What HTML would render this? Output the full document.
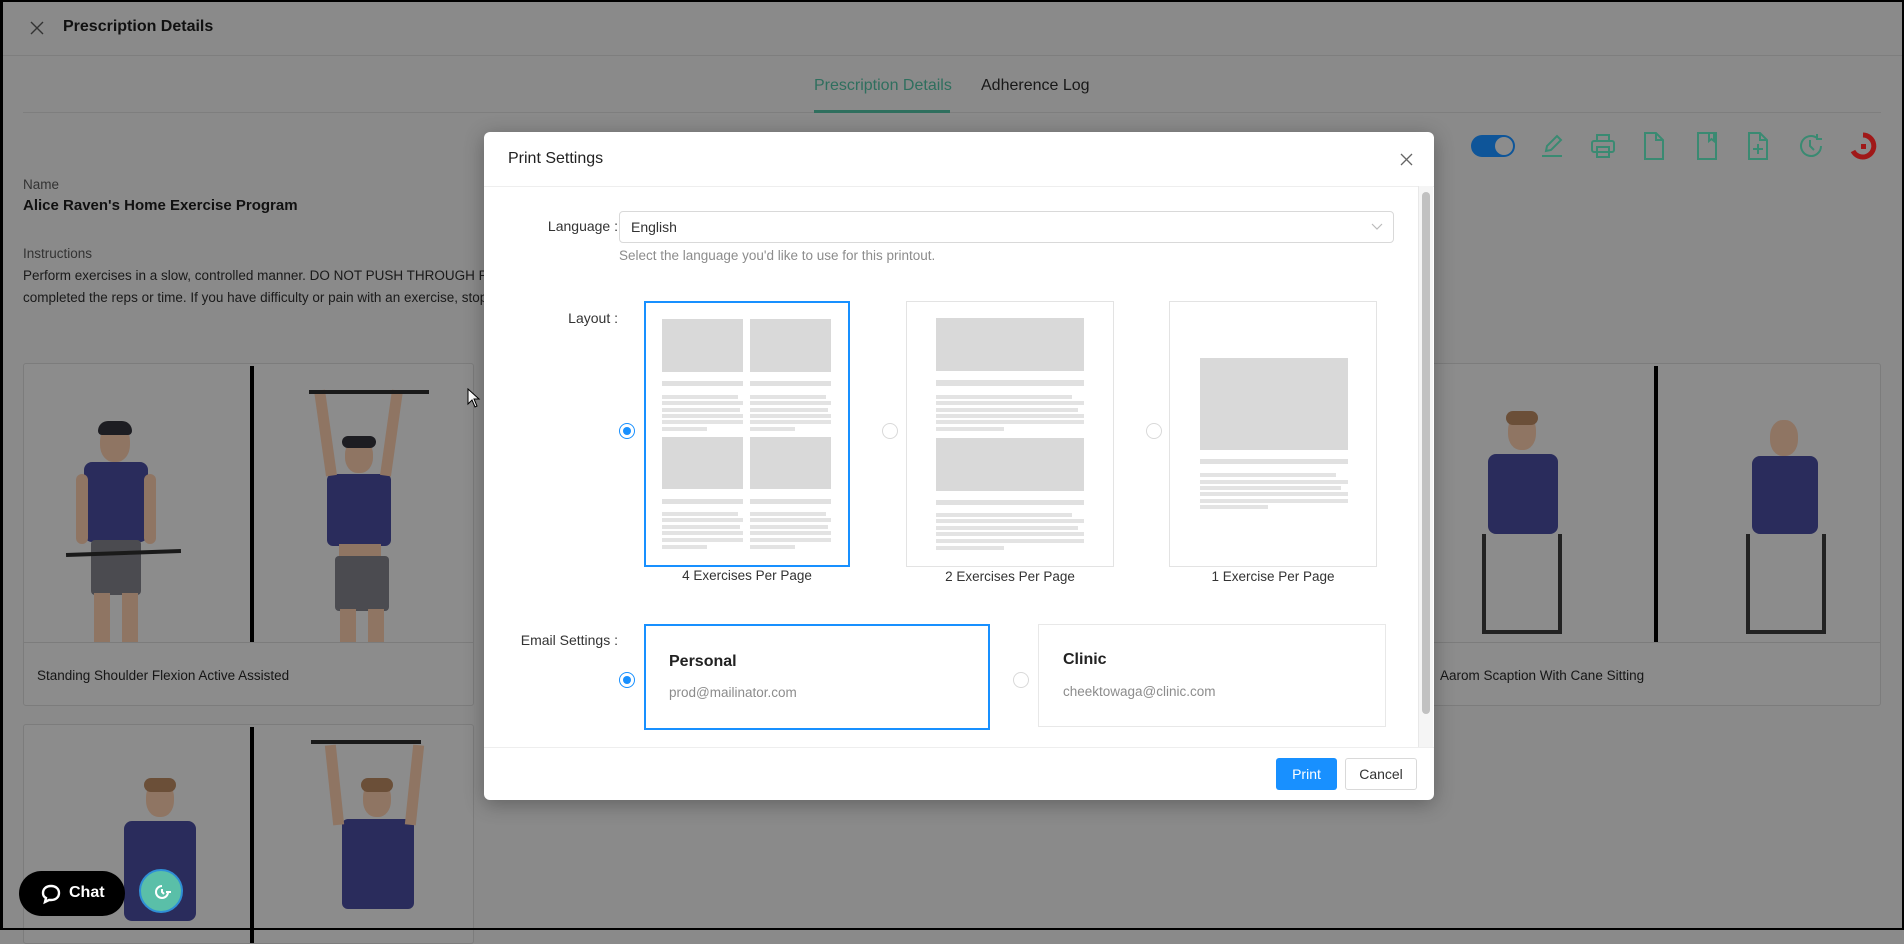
<!DOCTYPE html>
<html><head><meta charset="utf-8">
<style>
*{box-sizing:border-box;margin:0;padding:0}
body{width:1904px;height:930px;overflow:hidden;background:#8a8a8a;font-family:"Liberation Sans",sans-serif;position:relative;color:#161616}
.a{position:absolute}
.frame{position:absolute;left:0;top:0;width:1904px;height:930px;border:2px solid #000;border-left-width:3px;pointer-events:none;z-index:50}
.t{white-space:nowrap}
.card{position:absolute;border:1px solid #7c7c7c;border-radius:3px;background:#8c8c8c;overflow:hidden}
.fig{position:absolute}
.modal{position:absolute;left:484px;top:132px;width:950px;height:668px;background:#fff;border-radius:6px;box-shadow:0 4px 20px rgba(0,0,0,.3)}
.lbl{position:absolute;font-size:14px;color:#333;text-align:right}
.g{position:absolute;background:#d9d9d9}
.l{position:absolute;background:#e3e3e3;height:4px}
.b{position:absolute;background:#e0e0e0;height:5px}
.radio{position:absolute;width:16px;height:16px;border-radius:50%;border:1px solid #d9d9d9;background:#fff}
.radio.on{border-color:#1890ff}
.radio.on:after{content:"";position:absolute;left:3px;top:3px;width:8px;height:8px;border-radius:50%;background:#1890ff}
.cap{position:absolute;font-size:13.5px;color:#333;text-align:center}
</style></head><body>
<div class="frame"></div>

<svg class="a" style="left:30px;top:21px" width="14" height="14" viewBox="0 0 14 14"><path d="M1 1L13 13M13 1L1 13" stroke="#333" stroke-width="1.4"/></svg>
<div class="a t" style="left:63px;top:18px;font-size:16px;font-weight:bold;color:#111">Prescription Details</div>
<div class="a" style="left:3px;top:55px;width:1900px;height:1px;background:#7e7e7e"></div>

<div class="a t" style="left:814px;top:77px;font-size:16px;color:#2f6f5e">Prescription Details</div>
<div class="a t" style="left:981px;top:77px;font-size:16px;color:#181818">Adherence Log</div>
<div class="a" style="left:23px;top:112px;width:1858px;height:1px;background:#7e7e7e"></div>
<div class="a" style="left:814px;top:110px;width:136px;height:3px;background:#2f6f5e"></div>

<div class="a" style="left:1471px;top:135px;width:44px;height:22px;border-radius:11px;background:#0e5599"><div class="a" style="left:24px;top:2px;width:18px;height:18px;border-radius:50%;background:#8c8c8c"></div></div>
<svg class="a" style="left:1538px;top:132px" width="28" height="28" viewBox="0 0 28 28" fill="none" stroke="#3a8a72" stroke-width="2"><path d="M8 19L9 14L19 4L23 8L13 18Z"/><path d="M4 24H24"/></svg>
<svg class="a" style="left:1589px;top:132px" width="28" height="28" viewBox="0 0 28 28" fill="none" stroke="#3a8a72" stroke-width="2"><rect x="8" y="3" width="12" height="6"/><rect x="3" y="9" width="22" height="11" rx="2"/><rect x="8" y="15" width="12" height="10"/></svg>
<svg class="a" style="left:1641px;top:131px" width="26" height="30" viewBox="0 0 26 30" fill="none" stroke="#3a8a72" stroke-width="2"><path d="M4 2H15L22 9V28H4Z"/><path d="M15 2V9H22"/></svg>
<svg class="a" style="left:1694px;top:131px" width="26" height="30" viewBox="0 0 26 30" fill="none" stroke="#3a8a72" stroke-width="2"><rect x="4" y="2" width="18" height="26"/><path d="M15 2V10L17.5 8L20 10V2"/></svg>
<svg class="a" style="left:1745px;top:131px" width="26" height="30" viewBox="0 0 26 30" fill="none" stroke="#3a8a72" stroke-width="2"><path d="M4 2H15L22 9V28H4Z"/><path d="M15 2V9H22M13 13V23M8 18H18"/></svg>
<svg class="a" style="left:1797px;top:132px" width="28" height="28" viewBox="0 0 28 28" fill="none" stroke="#3a8a72" stroke-width="2"><path d="M24 14A10 10 0 1 1 20 6"/><path d="M20 2V7H25"/><path d="M13 8V14L17 18"/></svg>
<svg class="a" style="left:1848px;top:131px" width="30" height="30" viewBox="0 0 30 30" fill="none"><path d="M15 4A11 11 0 1 1 5 20" stroke="#a01818" stroke-width="5"/><rect x="13" y="13" width="5" height="5" fill="#a01818"/></svg>

<div class="a t" style="left:23px;top:177px;font-size:13.5px;color:#333">Name</div>
<div class="a t" style="left:23px;top:197px;font-size:15px;font-weight:bold;color:#111">Alice Raven's Home Exercise Program</div>
<div class="a t" style="left:23px;top:246px;font-size:13.5px;color:#333">Instructions</div>
<div class="a t" style="left:23px;top:268px;font-size:13.5px;color:#1a1a1a">Perform exercises in a slow, controlled manner. DO NOT PUSH THROUGH PAIN. Stop exercise if you experience increased pain, numbness or tingling. Maintain proper form and stop exercises when you feel muscle fatigue, or you have</div>
<div class="a t" style="left:23px;top:290px;font-size:13.5px;color:#1a1a1a">completed the reps or time. If you have difficulty or pain with an exercise, stop and contact your physical therapist.</div>

<div class="card" style="left:23px;top:363px;width:451px;height:343px">
 <div class="a" style="left:0;top:278px;width:449px;height:1px;background:#7c7c7c"></div>
 <div class="a" style="left:226px;top:2px;width:4px;height:276px;background:#000"></div>
 <div class="a t" style="left:13px;top:304px;font-size:13.5px">Standing Shoulder Flexion Active Assisted</div>
 <div class="fig" style="left:76px;top:60px;width:30px;height:38px;border-radius:45%;background:#8f7563"></div>
 <div class="fig" style="left:74px;top:57px;width:34px;height:14px;border-radius:10px 10px 4px 4px;background:#1d1d22"></div>
 <div class="fig" style="left:60px;top:98px;width:64px;height:80px;border-radius:8px;background:#2a2c5c"></div>
 <div class="fig" style="left:52px;top:110px;width:12px;height:70px;background:#8f7563;border-radius:6px"></div>
 <div class="fig" style="left:120px;top:110px;width:12px;height:70px;background:#8f7563;border-radius:6px"></div>
 <div class="fig" style="left:67px;top:176px;width:50px;height:55px;background:#4b4b50;border-radius:4px"></div>
 <div class="fig" style="left:70px;top:229px;width:16px;height:49px;background:#8f7563"></div>
 <div class="fig" style="left:98px;top:229px;width:16px;height:49px;background:#8f7563"></div>
 <div class="fig" style="left:42px;top:187px;width:115px;height:4px;background:#1a1a1a;transform:rotate(-2deg)"></div>
 <div class="fig" style="left:321px;top:75px;width:28px;height:34px;border-radius:45%;background:#8f7563"></div>
 <div class="fig" style="left:318px;top:72px;width:34px;height:12px;border-radius:10px;background:#1d1d22"></div>
 <div class="fig" style="left:303px;top:110px;width:64px;height:72px;border-radius:6px;background:#2a2c5c"></div>
 <div class="fig" style="left:296px;top:26px;width:11px;height:86px;background:#8f7563;transform:rotate(-8deg)"></div>
 <div class="fig" style="left:362px;top:26px;width:11px;height:86px;background:#8f7563;transform:rotate(8deg)"></div>
 <div class="fig" style="left:285px;top:26px;width:120px;height:4px;background:#1a1a1a"></div>
 <div class="fig" style="left:315px;top:180px;width:42px;height:12px;background:#8f7563"></div>
 <div class="fig" style="left:311px;top:192px;width:54px;height:55px;background:#4b4b50;border-radius:4px"></div>
 <div class="fig" style="left:316px;top:245px;width:16px;height:33px;background:#8f7563"></div>
 <div class="fig" style="left:344px;top:245px;width:16px;height:33px;background:#8f7563"></div>
</div>
<div class="card" style="left:23px;top:724px;width:451px;height:220px">
 <div class="a" style="left:226px;top:2px;width:4px;height:220px;background:#000"></div>
 <div class="fig" style="left:122px;top:56px;width:28px;height:36px;border-radius:45%;background:#8f7563"></div>
 <div class="fig" style="left:120px;top:53px;width:32px;height:14px;border-radius:10px;background:#6b4f38"></div>
 <div class="fig" style="left:100px;top:96px;width:72px;height:100px;border-radius:8px;background:#2a2c5c"></div>
 <div class="fig" style="left:339px;top:56px;width:28px;height:36px;border-radius:45%;background:#8f7563"></div>
 <div class="fig" style="left:337px;top:53px;width:32px;height:14px;border-radius:10px;background:#6b4f38"></div>
 <div class="fig" style="left:318px;top:94px;width:72px;height:90px;border-radius:6px;background:#2a2c5c"></div>
 <div class="fig" style="left:287px;top:15px;width:110px;height:4px;background:#1a1a1a"></div>
 <div class="fig" style="left:305px;top:20px;width:11px;height:80px;background:#8f7563;transform:rotate(-6deg)"></div>
 <div class="fig" style="left:385px;top:20px;width:11px;height:80px;background:#8f7563;transform:rotate(6deg)"></div>
</div>
<div class="card" style="left:1409px;top:363px;width:472px;height:343px">
 <div class="a" style="left:0;top:278px;width:470px;height:1px;background:#7c7c7c"></div>
 <div class="a" style="left:244px;top:2px;width:4px;height:276px;background:#000"></div>
 <div class="a t" style="left:30px;top:304px;font-size:13.5px">Aarom Scaption With Cane Sitting</div>
 <div class="fig" style="left:98px;top:50px;width:28px;height:36px;border-radius:45%;background:#8f7563"></div>
 <div class="fig" style="left:96px;top:47px;width:32px;height:14px;border-radius:10px;background:#6b4f38"></div>
 <div class="fig" style="left:78px;top:90px;width:70px;height:80px;border-radius:8px;background:#2a2c5c"></div>
 <div class="fig" style="left:72px;top:170px;width:80px;height:100px;border:4px solid #222;border-top:none"></div>
 <div class="fig" style="left:360px;top:56px;width:28px;height:36px;border-radius:45%;background:#8f7563"></div>
 <div class="fig" style="left:342px;top:92px;width:66px;height:78px;border-radius:8px;background:#2a2c5c"></div>
 <div class="fig" style="left:336px;top:170px;width:80px;height:100px;border:4px solid #222;border-top:none"></div>
</div>

<div class="a" style="left:19px;top:871px;width:106px;height:45px;border-radius:23px;background:#000;color:#fff;font-weight:bold;font-size:16px">
 <svg class="a" style="left:21px;top:12px" width="22" height="22" viewBox="0 0 22 22" fill="none" stroke="#fff" stroke-width="2.4"><path d="M11 3C6 3 3 6 3 10C3 12 4 14 6 15L5 19L9 17C10 17 10 17 11 17C16 17 19 14 19 10C19 6 16 3 11 3Z"/></svg>
 <div class="a t" style="left:50px;top:13px">Chat</div>
</div>
<div class="a" style="left:139px;top:869px;width:44px;height:44px;border-radius:50%;background:#5abfa8;border:2px solid #2f8fd6">
 <svg class="a" style="left:11px;top:11px" width="20" height="20" viewBox="0 0 20 20" fill="none" stroke="#fff" stroke-width="2"><path d="M16 10A6 6 0 1 1 10 4"/><path d="M10 7V10L12 12M14 10H19"/></svg>
</div>
<svg class="a" style="left:467px;top:388px" width="14" height="20" viewBox="0 0 14 20"><path d="M1 1V16L5 12L8 19L10 18L7 11H12Z" fill="#fff" stroke="#000"/></svg>

<div class="modal">
 <div class="a t" style="left:24px;top:18px;font-size:16px;color:#222">Print Settings</div>
 <svg class="a" style="left:916px;top:21px" width="13" height="13" viewBox="0 0 13 13"><path d="M1 1L12 12M12 1L1 12" stroke="#666" stroke-width="1.3"/></svg>
 <div class="a" style="left:0;top:54px;width:950px;height:1px;background:#eee"></div>

 <div class="lbl t" style="right:816px;top:86px">Language :</div>
 <div class="a" style="left:135px;top:79px;width:775px;height:32px;border:1px solid #d9d9d9;border-radius:4px">
  <div class="a t" style="left:11px;top:7px;font-size:14px;color:#333">English</div>
  <svg class="a" style="left:751px;top:11px" width="12" height="8" viewBox="0 0 12 8" fill="none" stroke="#bbb" stroke-width="1.2"><path d="M1 1L6 6L11 1"/></svg>
 </div>
 <div class="a t" style="left:135px;top:116px;font-size:13.5px;color:#8c8c8c">Select the language you'd like to use for this printout.</div>

 <div class="lbl t" style="right:816px;top:178px">Layout :</div>
 <div class="radio on" style="left:135px;top:291px"></div>
 <div class="radio" style="left:398px;top:291px"></div>
 <div class="radio" style="left:662px;top:291px"></div>

 <div class="a" style="left:160px;top:169px;width:206px;height:266px;border:2px solid #1890ff"></div>
 <div class="g" style="left:178px;top:187px;width:81px;height:53px"></div>
 <div class="g" style="left:266px;top:187px;width:81px;height:53px"></div>
 <div class="b" style="left:178px;top:249px;width:81px"></div><div class="b" style="left:266px;top:249px;width:81px"></div>
 <div class="l" style="left:178px;top:263px;width:76px"></div><div class="l" style="left:266px;top:263px;width:76px"></div>
 <div class="l" style="left:178px;top:269px;width:81px"></div><div class="l" style="left:266px;top:269px;width:81px"></div>
 <div class="l" style="left:178px;top:276px;width:78px"></div><div class="l" style="left:266px;top:276px;width:78px"></div>
 <div class="l" style="left:178px;top:282px;width:81px"></div><div class="l" style="left:266px;top:282px;width:81px"></div>
 <div class="l" style="left:178px;top:288px;width:81px"></div><div class="l" style="left:266px;top:288px;width:81px"></div>
 <div class="l" style="left:178px;top:295px;width:45px"></div><div class="l" style="left:266px;top:295px;width:45px"></div>
 <div class="g" style="left:178px;top:305px;width:81px;height:52px"></div>
 <div class="g" style="left:266px;top:305px;width:81px;height:52px"></div>
 <div class="b" style="left:178px;top:367px;width:81px"></div><div class="b" style="left:266px;top:367px;width:81px"></div>
 <div class="l" style="left:178px;top:380px;width:76px"></div><div class="l" style="left:266px;top:380px;width:76px"></div>
 <div class="l" style="left:178px;top:386px;width:81px"></div><div class="l" style="left:266px;top:386px;width:81px"></div>
 <div class="l" style="left:178px;top:393px;width:78px"></div><div class="l" style="left:266px;top:393px;width:78px"></div>
 <div class="l" style="left:178px;top:399px;width:81px"></div><div class="l" style="left:266px;top:399px;width:81px"></div>
 <div class="l" style="left:178px;top:406px;width:81px"></div><div class="l" style="left:266px;top:406px;width:81px"></div>
 <div class="l" style="left:178px;top:413px;width:45px"></div><div class="l" style="left:266px;top:413px;width:45px"></div>
 <div class="cap t" style="left:160px;top:436px;width:206px">4 Exercises Per Page</div>

 <div class="a" style="left:422px;top:169px;width:208px;height:266px;border:1px solid #e3e3e3"></div>
 <div class="g" style="left:452px;top:186px;width:148px;height:53px"></div>
 <div class="b" style="left:452px;top:248px;width:148px;height:6px"></div>
 <div class="l" style="left:452px;top:263px;width:136px"></div>
 <div class="l" style="left:452px;top:269px;width:148px"></div>
 <div class="l" style="left:452px;top:276px;width:142px"></div>
 <div class="l" style="left:452px;top:282px;width:148px"></div>
 <div class="l" style="left:452px;top:288px;width:148px"></div>
 <div class="l" style="left:452px;top:295px;width:68px"></div>
 <div class="g" style="left:452px;top:306px;width:148px;height:53px"></div>
 <div class="b" style="left:452px;top:368px;width:148px"></div>
 <div class="l" style="left:452px;top:381px;width:136px"></div>
 <div class="l" style="left:452px;top:387px;width:148px"></div>
 <div class="l" style="left:452px;top:394px;width:142px"></div>
 <div class="l" style="left:452px;top:400px;width:148px"></div>
 <div class="l" style="left:452px;top:407px;width:148px"></div>
 <div class="l" style="left:452px;top:414px;width:68px"></div>
 <div class="cap t" style="left:422px;top:437px;width:208px">2 Exercises Per Page</div>

 <div class="a" style="left:685px;top:169px;width:208px;height:266px;border:1px solid #e3e3e3"></div>
 <div class="g" style="left:716px;top:226px;width:148px;height:92px"></div>
 <div class="b" style="left:716px;top:327px;width:148px"></div>
 <div class="l" style="left:716px;top:341px;width:136px"></div>
 <div class="l" style="left:716px;top:348px;width:148px"></div>
 <div class="l" style="left:716px;top:354px;width:141px"></div>
 <div class="l" style="left:716px;top:360px;width:148px"></div>
 <div class="l" style="left:716px;top:367px;width:148px"></div>
 <div class="l" style="left:716px;top:373px;width:68px"></div>
 <div class="cap t" style="left:685px;top:437px;width:208px">1 Exercise Per Page</div>

 <div class="lbl t" style="right:816px;top:500px">Email Settings :</div>
 <div class="radio on" style="left:135px;top:540px"></div>
 <div class="radio" style="left:529px;top:540px"></div>
 <div class="a" style="left:160px;top:492px;width:346px;height:106px;border:2px solid #1890ff"></div>
 <div class="a t" style="left:185px;top:521px;font-size:16px;font-weight:bold;color:#222">Personal</div>
 <div class="a t" style="left:185px;top:553px;font-size:13.5px;color:#8c8c8c">prod@mailinator.com</div>
 <div class="a" style="left:554px;top:492px;width:348px;height:103px;border:1px solid #e8e8e8"></div>
 <div class="a t" style="left:579px;top:519px;font-size:16px;font-weight:bold;color:#222">Clinic</div>
 <div class="a t" style="left:579px;top:552px;font-size:13.5px;color:#8c8c8c">cheektowaga@clinic.com</div>

 <div class="a" style="left:934px;top:54px;width:15px;height:561px;background:#f5f5f5;border-left:1px solid #e8e8e8"></div>
 <div class="a" style="left:938px;top:60px;width:8px;height:522px;border-radius:4px;background:#c1c1c1"></div>

 <div class="a" style="left:0;top:615px;width:950px;height:1px;background:#eee"></div>
 <div class="a" style="left:792px;top:626px;width:61px;height:32px;border-radius:3px;background:#1890ff;color:#fff;font-size:14px;text-align:center;line-height:32px">Print</div>
 <div class="a" style="left:861px;top:626px;width:72px;height:32px;border-radius:3px;border:1px solid #d9d9d9;color:#333;font-size:14px;text-align:center;line-height:30px">Cancel</div>
</div>
</body></html>
